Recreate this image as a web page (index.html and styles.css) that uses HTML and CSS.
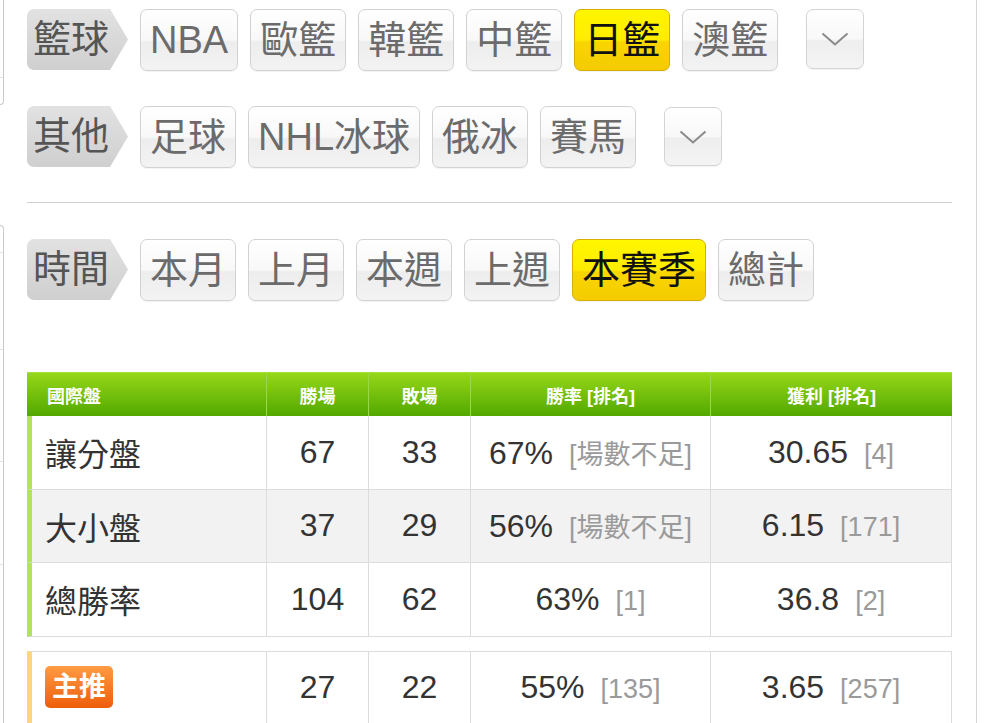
FILE: index.html
```html
<!DOCTYPE html>
<html lang="zh-Hant">
<head>
<meta charset="utf-8">
<title>國際盤</title>
<link rel="stylesheet" href="styles.css">
</head>
<body>
<div class="frame">
  <div class="side">
    <div class="side-top"><div class="side-seg seg-78"></div></div>
    <div class="side-bottom">
      <div class="side-seg seg-26"></div>
      <div class="side-seg seg-97"></div>
      <div class="side-seg seg-112"></div>
      <div class="side-seg seg-103"></div>
    </div>
  </div>
  <div class="main">
    <div class="filter-row row-a">
      <span class="tag">籃球</span>
      <a class="btn">NBA</a>
      <a class="btn">歐籃</a>
      <a class="btn">韓籃</a>
      <a class="btn">中籃</a>
      <a class="btn active">日籃</a>
      <a class="btn">澳籃</a>
      <button class="more" type="button"><svg width="28" height="14" viewBox="0 0 28 14"><path d="M1.5 1.5 L14 12.5 L26.5 1.5" fill="none" stroke="#8a8a8a" stroke-width="2"/></svg></button>
    </div>
    <div class="filter-row row-b">
      <span class="tag">其他</span>
      <a class="btn">足球</a>
      <a class="btn">NHL冰球</a>
      <a class="btn">俄冰</a>
      <a class="btn">賽馬</a>
      <button class="more" type="button"><svg width="28" height="14" viewBox="0 0 28 14"><path d="M1.5 1.5 L14 12.5 L26.5 1.5" fill="none" stroke="#8a8a8a" stroke-width="2"/></svg></button>
    </div>
    <div class="sep"></div>
    <div class="filter-row row-c">
      <span class="tag">時間</span>
      <a class="btn">本月</a>
      <a class="btn">上月</a>
      <a class="btn">本週</a>
      <a class="btn">上週</a>
      <a class="btn active">本賽季</a>
      <a class="btn">總計</a>
    </div>

    <table class="stats">
      <colgroup><col class="c1"><col class="c2"><col class="c3"><col class="c4"><col class="c5"></colgroup>
      <thead>
        <tr><th class="first">國際盤</th><th>勝場</th><th>敗場</th><th>勝率 [排名]</th><th class="last">獲利 [排名]</th></tr>
      </thead>
      <tbody>
        <tr><td class="name">讓分盤</td><td>67</td><td>33</td><td>67%<span class="rank">[場數不足]</span></td><td>30.65<span class="rank">[4]</span></td></tr>
        <tr class="alt"><td class="name">大小盤</td><td>37</td><td>29</td><td>56%<span class="rank">[場數不足]</span></td><td>6.15<span class="rank">[171]</span></td></tr>
        <tr><td class="name">總勝率</td><td>104</td><td>62</td><td>63%<span class="rank">[1]</span></td><td>36.8<span class="rank">[2]</span></td></tr>
      </tbody>
    </table>

    <table class="stats pick">
      <colgroup><col class="c1"><col class="c2"><col class="c3"><col class="c4"><col class="c5"></colgroup>
      <tbody>
        <tr><td class="name"><span class="badge">主推</span></td><td>27</td><td>22</td><td>55%<span class="rank">[135]</span></td><td>3.65<span class="rank">[257]</span></td></tr>
      </tbody>
    </table>
  </div>
</div>
</body>
</html>
```
FILE: styles.css
```css
html, body {
  margin: 0;
  padding: 0;
  background: #ffffff;
}
body {
  font-family: "Liberation Sans", "Noto Sans CJK TC", sans-serif;
  color: #333;
}
.frame {
  display: flex;
  width: 976px;
  height: 723px;
  border-right: 1px solid #d6d6d6;
  overflow: hidden;
}

/* left sliver of a side panel */
.side {
  width: 4px;
  flex: none;
  display: flex;
  flex-direction: column;
}
.side-top {
  height: 105px;
  box-sizing: border-box;
  border-right: 1px solid #c9c9c9;
  border-bottom: 1px solid #c9c9c9;
  border-bottom-right-radius: 5px;
}
.side-bottom {
  margin-top: 120px;
  flex: 1;
  border-right: 1px solid #c9c9c9;
  border-top: 1px solid #c9c9c9;
  border-top-right-radius: 5px;
}
.side-seg { border-bottom: 1px solid #e2e2e2; }
.seg-78 { height: 77px; }
.seg-26 { height: 26px; }
.seg-97 { height: 96px; }
.seg-112 { height: 111px; }
.seg-103 { height: 102px; }

.main {
  margin-left: 23px;
  width: 925px;
  padding-top: 9px;
}

.filter-row {
  display: flex;
  align-items: flex-start;
  gap: 12px;
  height: 62px;
}
.row-a { margin-bottom: 35px; }
.row-b { margin-bottom: 34px; }
.row-c { margin-bottom: 71px; }
.sep {
  height: 1px;
  background: #d2d2d2;
  margin-bottom: 36px;
}

.tag {
  height: 61px;
  box-sizing: border-box;
  padding: 0 19px 0 6px;
  font-size: 38px;
  line-height: 61px;
  color: #555;
  background: linear-gradient(#e2e2e2, #cfcfcf);
  border-radius: 7px 0 0 7px;
  clip-path: polygon(0 0, calc(100% - 18px) 0, 100% 50%, calc(100% - 18px) 100%, 0 100%);
}

.btn {
  display: block;
  height: 62px;
  box-sizing: border-box;
  padding: 0 9px;
  border: 1px solid #d2d2d2;
  border-radius: 7px;
  font-size: 38px;
  line-height: 60px;
  color: #6b6b6b;
  background: linear-gradient(#ffffff 0%, #f8f8f8 50%, #ededed 53%, #f3f3f3 100%);
  box-shadow: 0 1px 1px rgba(0, 0, 0, 0.05);
  white-space: nowrap;
}
.btn.active {
  color: #111;
  border-color: #d6b000;
  background: linear-gradient(#fff600 0%, #ffec00 50%, #f9d600 53%, #f4cb00 100%);
}

.more {
  margin-left: 16px;
  width: 58px;
  height: 60px;
  padding: 0;
  border: 1px solid #d4d4d4;
  border-radius: 7px;
  background: linear-gradient(#ffffff 0%, #f8f8f8 50%, #eeeeee 53%, #f4f4f4 100%);
  box-shadow: 0 1px 1px rgba(0, 0, 0, 0.05);
  display: flex;
  align-items: center;
  justify-content: center;
}
.row-b .more { height: 59px; margin-top: 1px; }

/* table */
.stats {
  width: 925px;
  table-layout: fixed;
  border-collapse: separate;
  border-spacing: 0;
}
.c1 { width: 240px; }
.c2 { width: 102px; }
.c3 { width: 102px; }
.c4 { width: 240px; }
.c5 { width: 241px; }

.stats th {
  height: 44px;
  box-sizing: border-box;
  padding: 0;
  font-size: 18px;
  font-weight: bold;
  color: #fff;
  text-align: center;
  background: linear-gradient(#96d719, #52a800);
  border-right: 1px solid #9ad84a;
  border-top: 1px solid #a6e030;
}
.stats th.first {
  text-align: left;
  padding-left: 20px;
}
.stats th.last { border-right: 0; }

.stats td {
  height: 73.5px;
  box-sizing: border-box;
  padding: 0;
  border-right: 1px solid #dcdcdc;
  border-bottom: 1px solid #dcdcdc;
  text-align: center;
  font-size: 32px;
  color: #333;
  white-space: nowrap;
}
.stats td.name {
  text-align: left;
  padding-left: 13px;
  border-left: 5px solid #b3e35a;
}
.stats tr.alt td { background: #f2f2f2; }

.rank {
  margin-left: 16px;
  font-size: 27px;
  color: #9a9a9a;
}

.pick { margin-top: 14px; }
.pick td { border-top: 1px solid #dcdcdc; }
.pick td.name { border-left-color: #ffd47c; }

.badge {
  display: inline-block;
  width: 68px;
  height: 42px;
  border-radius: 5px;
  background: linear-gradient(#ff9b42, #ee5d0b);
  color: #fff;
  font-size: 27px;
  font-weight: bold;
  line-height: 42px;
  text-align: center;
  vertical-align: middle;
}
```
